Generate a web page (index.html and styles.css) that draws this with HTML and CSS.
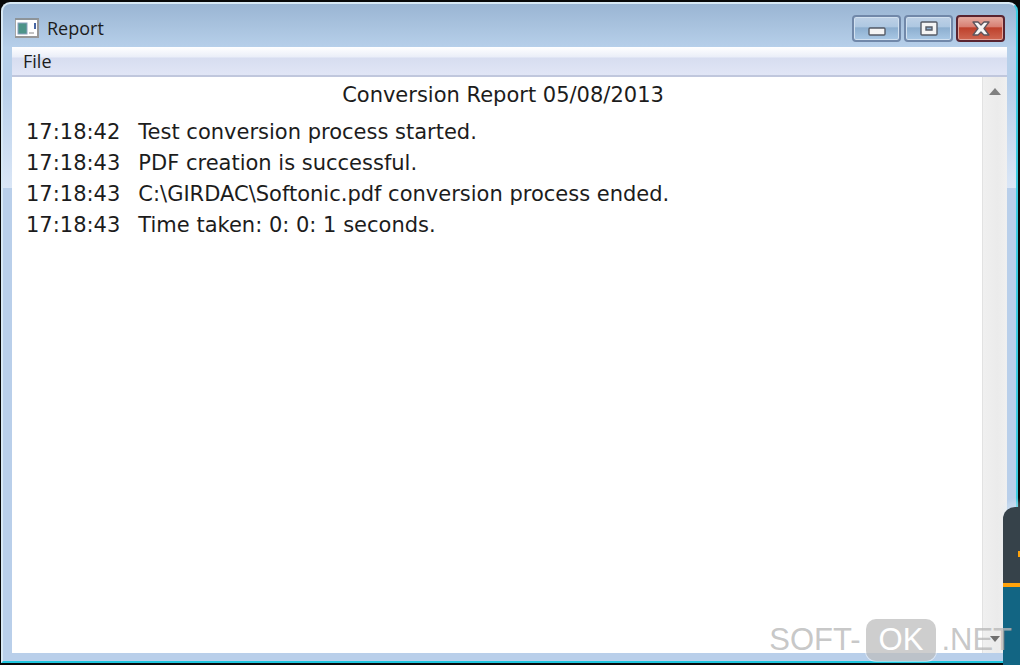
FILE: index.html
```
<!DOCTYPE html>
<html lang="en">
<head>
    <meta charset="UTF-8">
    <meta name="viewport" content="width=device-width, initial-scale=1.0">
    <title>Report</title>
    <link rel="stylesheet" href="styles.css">
</head>
<body>
<div class="window">
    <header class="titlebar">
        <svg class="app-icon" width="24" height="20" viewBox="0 0 24 20">
            <rect x="0.5" y="0.5" width="23" height="19" fill="#fff" stroke="#a5a5a5"/>
            <path d="M0 1h24" stroke="#8d9499" stroke-width="2"/>
            <path d="M0 19h24M23 1v18" stroke="#979797" stroke-width="2"/>
            <rect x="3" y="5" width="9" height="11" fill="#4d9489" stroke="#8aa0bd"/>
            <path d="M20 5v6" stroke="#4766a4" stroke-width="2"/>
            <path d="M14 15h5" stroke="#c4c4c4" stroke-width="2"/>
        </svg>
        <h1>Report</h1>
        <div class="controls">
            <button class="control" aria-label="Minimize">
                <svg width="18" height="16" viewBox="0 0 18 16">
                    <rect x="1" y="7" width="16" height="7" rx="1" fill="#f4f4f4" stroke="#555b66" stroke-width="1.4"/>
                </svg>
            </button>
            <button class="control" aria-label="Maximize">
                <svg width="18" height="16" viewBox="0 0 18 16">
                    <path fill-rule="evenodd" d="M2 1h14q1 0 1 1v11q0 1-1 1H2q-1 0-1-1V2q0-1 1-1zM6 6h6v3H6z" fill="#f4f4f4" stroke="#555b66" stroke-width="1.4"/>
                </svg>
            </button>
            <button class="control close" aria-label="Close">
                <svg width="18" height="16" viewBox="0 0 18 16">
                    <path d="M1 1h5l3 3 3-3h5l-5 6.500 5 6.500h-5l-3-3-3 3H1l5-6.500z" fill="#f6f6f6" stroke="#5c545c" stroke-width="1.300" stroke-linejoin="round"/>
                </svg>
            </button>
        </div>
    </header>
    <nav class="menubar">
        <button class="menu-item">File</button>
    </nav>
    <div class="content">
        <main class="report">
            <h2>Conversion Report 05/08/2013</h2>
            <table class="log">
                <tr><td class="time">17:18:42</td><td>Test conversion process started.</td></tr>
                <tr><td class="time">17:18:43</td><td>PDF creation is successful.</td></tr>
                <tr><td class="time">17:18:43</td><td>C:\GIRDAC\Softonic.pdf conversion process ended.</td></tr>
                <tr><td class="time">17:18:43</td><td>Time taken: 0: 0: 1 seconds.</td></tr>
            </table>
        </main>
        <div class="scrollbar">
            <svg width="12" height="8" viewBox="0 0 12 8"><path d="M0 7l6-7 6 7z" fill="#808080"/></svg>
            <svg width="10" height="6" viewBox="0 0 10 6"><path d="M0 0h10L5 6z" fill="#707070"/></svg>
        </div>
    </div>
</div>

<div class="side-tab">
    <div class="side-top"></div>
    <div class="side-bottom"></div>
</div>

<div class="watermark">
    <span>SOFT-</span>
    <span class="badge">OK</span>
    <span>.NET</span>
</div>
</body>
</html>
```
FILE: styles.css
```
* {
    margin: 0;
    padding: 0;
    box-sizing: border-box;
}

body {
    position: relative;
    height: 100vh;
    padding: 2px 2px 2px 1px;
    background: #080808;
    overflow: hidden;
    font-family: "DejaVu Sans", Verdana, sans-serif;
    color: #1c1c1c;
}

/* window frame */
.window {
    display: flex;
    flex-direction: column;
    height: 100%;
    padding: 0 9px 8px;
    border: 2px solid #d8e9f5;
    border-right-color: #3ccbe0;
    border-bottom-color: #1fc5dd;
    border-radius: 9px 9px 0 0;
    background: linear-gradient(#9ab5d3 0, #b7d0ea 44px, #b7cfea 80px, #dae6f6 184px, #b9cfea 184px);
}

.titlebar {
    display: flex;
    align-items: center;
    height: 43px;
    padding: 6px 2px 0 3px;
}

.app-icon {
    margin-bottom: 2px;
}

.titlebar h1 {
    flex: 1;
    padding: 0 0 2px 8px;
    font: 18px "Open Sans", sans-serif;
}

.controls {
    display: flex;
    gap: 3px;
}

.control {
    display: flex;
    align-items: center;
    justify-content: center;
    width: 49px;
    height: 27px;
    border: 2px solid #7188a9;
    border-radius: 4px;
    background: linear-gradient(#bed1e6 0, #adc7e1 45%, #8caecf 46%, #a9c8e5 100%);
    box-shadow: inset 0 0 0 1px #d2e1f0;
}

.close {
    border-color: #5a2430;
    background: linear-gradient(#e5aba1 0, #d77d70 45%, #bd402b 46%, #cf6752 100%);
    box-shadow: inset 0 0 0 1px #e3a399;
}

.menubar {
    display: flex;
    height: 30px;
    border-bottom: 2px solid #c0c7dd;
    background: linear-gradient(#fff 0, #eaeef8 10px, #d7ddf0 11px, #e1e6f6 100%);
}

.menu-item {
    padding: 0 11px;
    border: none;
    background: none;
    font: 18px "Open Sans", sans-serif;
    color: #1c1c1c;
}

/* report area */
.content {
    flex: 1;
    display: flex;
    min-height: 0;
    background: #fff;
}

.report {
    flex: 1;
    padding: 2px 0 0 14px;
    font-size: 21px;
}

.report h2 {
    padding: 0 2px 6px 0;
    font-size: inherit;
    font-weight: normal;
    line-height: 32px;
    text-align: center;
}

.log {
    border-collapse: collapse;
    line-height: 31px;
}

.time {
    padding-right: 18px;
}

.scrollbar {
    display: flex;
    flex-direction: column;
    align-items: center;
    justify-content: space-between;
    width: 25px;
    padding: 11px 0;
    border-left: 1px solid #e2e2e2;
    background: linear-gradient(90deg, #f0f0f0, #ebebeb 60%, #f0f0f0);
}

/* tab on the right edge of the screen */
.side-tab {
    position: absolute;
    right: 0;
    bottom: 0;
    width: 17px;
}

.side-top {
    height: 76px;
    border-radius: 12px 0 0 0;
    background: linear-gradient(#ffa30c, #ffa30c) right 44px / 2px 6px no-repeat #36424a;
    box-shadow: 0 -6px 4px rgba(220, 235, 245, 0.4);
}

.side-bottom {
    height: 82px;
    border-top: 4px solid #ffa30c;
    background: #126583;
}

.watermark {
    position: absolute;
    right: 8px;
    bottom: 4px;
    display: flex;
    align-items: center;
    gap: 5px;
    font: 31px "Liberation Sans", Arial, sans-serif;
    color: rgba(185, 185, 185, 0.8);
}

.badge {
    padding: 0 13px;
    border-radius: 10px;
    background: rgba(190, 190, 190, 0.75);
    box-shadow: 0 0 0 1px rgba(255, 255, 255, 0.5);
    line-height: 42px;
    color: #fff;
}
```
